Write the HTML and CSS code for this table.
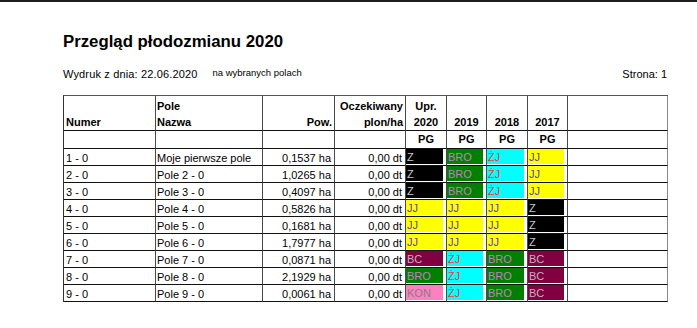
FILE: index.html
```html
<!DOCTYPE html>
<html lang="pl">
<head>
<meta charset="utf-8">
<title>Przegląd płodozmianu 2020</title>
<link rel="stylesheet" href="styles.css">
</head>
<body>
<div class="topbar"></div>
<div class="page">
  <h1 class="title">Przegląd płodozmianu 2020</h1>
  <div class="meta">
    <div class="meta-left"><span class="printed">Wydruk z dnia: 22.06.2020</span><span class="scope">na wybranych polach</span></div>
    <div class="pageno">Strona: 1</div>
  </div>
  <div class="grid">
    <div class="c h left l2">Numer</div>
    <div class="c h left l1">Pole<br>Nazwa</div>
    <div class="c h right">Pow.</div>
    <div class="c h right">Oczekiwany<br>plon/ha</div>
    <div class="c h center">Upr.<br>2020</div>
    <div class="c h center">2019</div>
    <div class="c h center">2018</div>
    <div class="c h center">2017</div>
    <div class="c h"></div>

    <div class="c s"></div><div class="c s"></div><div class="c s"></div><div class="c s"></div>
    <div class="c s center">PG</div><div class="c s center">PG</div><div class="c s center">PG</div><div class="c s center">PG</div><div class="c s"></div>

    <div class="c d l2">1 - 0</div><div class="c d l1">Moje pierwsze pole</div><div class="c d right">0,1537 ha</div><div class="c d right">0,00 dt</div>
    <div class="c d k"><span class="b z">Z</span></div><div class="c d k"><span class="b bro">BRO</span></div><div class="c d k"><span class="b zj">ŻJ</span></div><div class="c d k"><span class="b jj">JJ</span></div><div class="c d"></div>

    <div class="c d l2">2 - 0</div><div class="c d l1">Pole 2 - 0</div><div class="c d right">1,0265 ha</div><div class="c d right">0,00 dt</div>
    <div class="c d k"><span class="b z">Z</span></div><div class="c d k"><span class="b bro">BRO</span></div><div class="c d k"><span class="b zj">ŻJ</span></div><div class="c d k"><span class="b jj">JJ</span></div><div class="c d"></div>

    <div class="c d l2">3 - 0</div><div class="c d l1">Pole 3 - 0</div><div class="c d right">0,4097 ha</div><div class="c d right">0,00 dt</div>
    <div class="c d k"><span class="b z">Z</span></div><div class="c d k"><span class="b bro">BRO</span></div><div class="c d k"><span class="b zj">ŻJ</span></div><div class="c d k"><span class="b jj">JJ</span></div><div class="c d"></div>

    <div class="c d l2">4 - 0</div><div class="c d l1">Pole 4 - 0</div><div class="c d right">0,5826 ha</div><div class="c d right">0,00 dt</div>
    <div class="c d k"><span class="b jj">JJ</span></div><div class="c d k"><span class="b jj">JJ</span></div><div class="c d k"><span class="b jj">JJ</span></div><div class="c d k"><span class="b z">Z</span></div><div class="c d"></div>

    <div class="c d l2">5 - 0</div><div class="c d l1">Pole 5 - 0</div><div class="c d right">0,1681 ha</div><div class="c d right">0,00 dt</div>
    <div class="c d k"><span class="b jj">JJ</span></div><div class="c d k"><span class="b jj">JJ</span></div><div class="c d k"><span class="b jj">JJ</span></div><div class="c d k"><span class="b z">Z</span></div><div class="c d"></div>

    <div class="c d l2">6 - 0</div><div class="c d l1">Pole 6 - 0</div><div class="c d right">1,7977 ha</div><div class="c d right">0,00 dt</div>
    <div class="c d k"><span class="b jj">JJ</span></div><div class="c d k"><span class="b jj">JJ</span></div><div class="c d k"><span class="b jj">JJ</span></div><div class="c d k"><span class="b z">Z</span></div><div class="c d"></div>

    <div class="c d l2">7 - 0</div><div class="c d l1">Pole 7 - 0</div><div class="c d right">0,0871 ha</div><div class="c d right">0,00 dt</div>
    <div class="c d k"><span class="b bc">BC</span></div><div class="c d k"><span class="b zj">ŻJ</span></div><div class="c d k"><span class="b bro">BRO</span></div><div class="c d k"><span class="b bc">BC</span></div><div class="c d"></div>

    <div class="c d l2">8 - 0</div><div class="c d l1">Pole 8 - 0</div><div class="c d right">2,1929 ha</div><div class="c d right">0,00 dt</div>
    <div class="c d k"><span class="b bro">BRO</span></div><div class="c d k"><span class="b zj">ŻJ</span></div><div class="c d k"><span class="b bro">BRO</span></div><div class="c d k"><span class="b bc">BC</span></div><div class="c d"></div>

    <div class="c d l2">9 - 0</div><div class="c d l1">Pole 9 - 0</div><div class="c d right">0,0061 ha</div><div class="c d right">0,00 dt</div>
    <div class="c d k"><span class="b kon">KON</span></div><div class="c d k"><span class="b zj">ŻJ</span></div><div class="c d k"><span class="b bro">BRO</span></div><div class="c d k"><span class="b bc">BC</span></div><div class="c d"></div>
  </div>
</div>
</body>
</html>
```
FILE: styles.css
```css
html, body {
  margin: 0;
  padding: 0;
  background: #ffffff;
}
body {
  font-family: "Liberation Sans", Arial, sans-serif;
  color: #000;
}
.topbar {
  height: 2px;
  background: #1e1e1e;
}
.page {
  padding-left: 63px;
  width: 605px;
}
.title {
  margin: 30px 0 0 0;
  font-size: 16.8px;
  line-height: 20px;
  font-weight: bold;
}
.meta {
  margin-top: 15px;
  display: flex;
  justify-content: space-between;
  align-items: flex-start;
  font-size: 11px;
  line-height: 14px;
  padding-right: 1px;
}
.meta-left {
  display: flex;
  align-items: flex-start;
}
.printed {
  letter-spacing: 0.15px;
}
.scope {
  font-size: 9.5px;
  line-height: 12px;
  margin-left: 15px;
}
.grid {
  margin-top: 14px;
  display: grid;
  grid-template-columns: 92px 107px 72px 71px 41px 40px 41px 40px 100px;
  grid-template-rows: 35px 18px repeat(9, 17px);
  border-left: 1px solid #333;
  border-top: 1px solid #555;
  width: 604px;
}
.c {
  border-right: 1px solid #4a4a4a;
  border-bottom: 1px solid #111;
  font-size: 11px;
  white-space: nowrap;
}
.c:nth-child(9n) {
  border-right-color: #888;
}
.h {
  font-weight: bold;
  line-height: 16px;
  display: flex;
  flex-direction: column;
  justify-content: flex-end;
}
.h.left { align-items: flex-start; }
.h.right { align-items: flex-end; text-align: right; padding-right: 2px; }
.h.center { align-items: center; text-align: center; }
.s {
  font-weight: bold;
  line-height: 17px;
}
.center { text-align: center; }
.right { text-align: right; padding-right: 3px; }
.l2 { padding-left: 2px; }
.l1 { padding-left: 1px; }
.d {
  line-height: 14px;
  padding-top: 2px;
}
.d.k {
  padding-top: 0;
  padding-right: 3px;
}
.b {
  display: block;
  height: 15px;
  line-height: 17px;
  padding-left: 1px;
}
.z { background: #000000; color: #c8c8c8; }
.bro { background: #008000; color: #c080c0; }
.zj { background: #00ffff; color: #ff3333; }
.jj { background: #ffff00; color: #6040c0; }
.bc { background: #800040; color: #c8b0c0; }
.kon { background: #ff80c0; color: #808080; }
```
